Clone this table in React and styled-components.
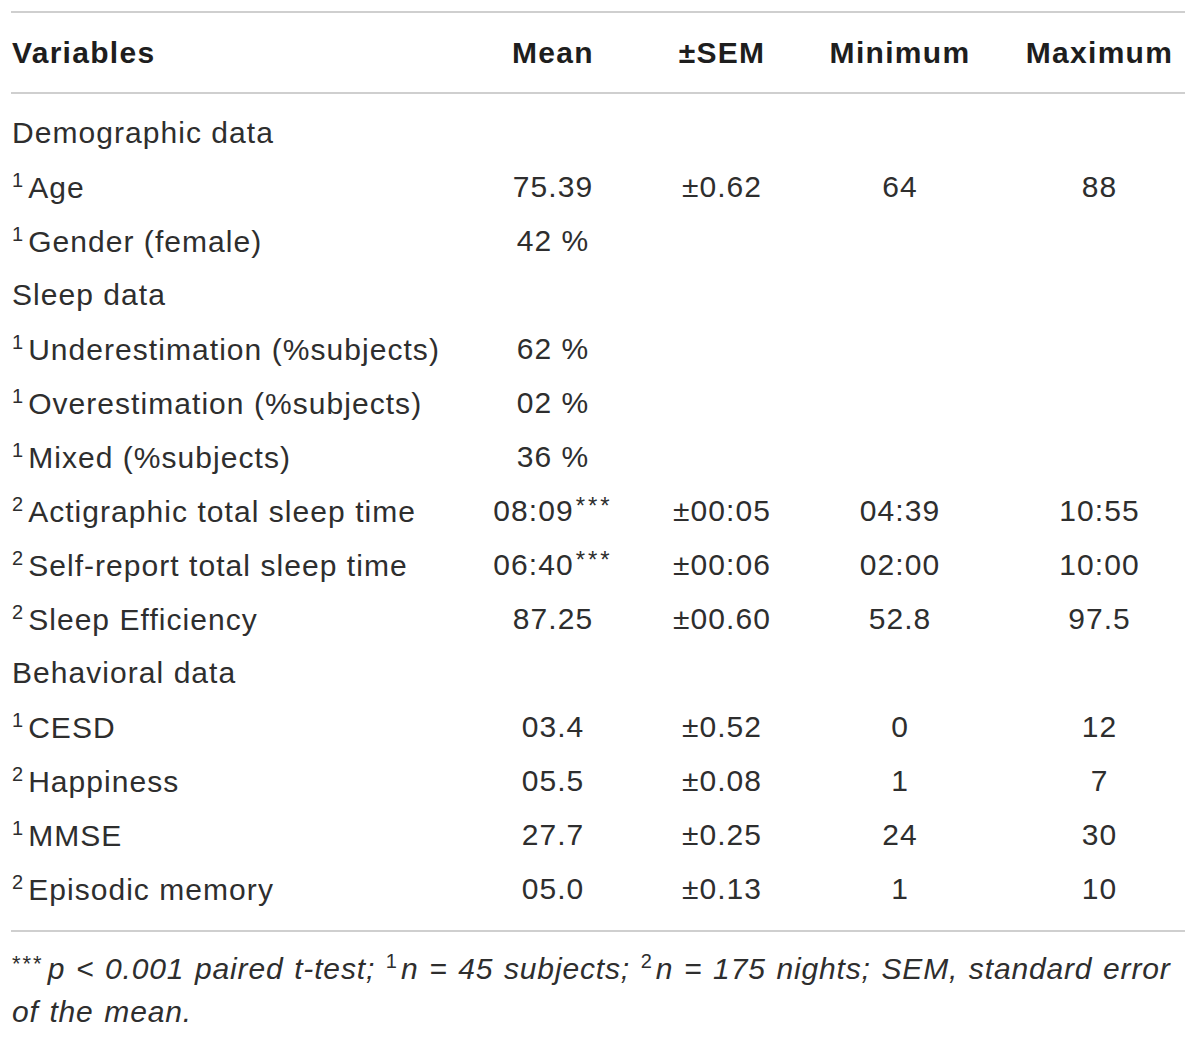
import React from 'react'
import styled, { createGlobalStyle } from 'styled-components'

const rows = [
  { section: 'Demographic data' },
  { sup: '1', label: 'Age', mean: '75.39', sem: '±0.62', min: '64', max: '88' },
  { sup: '1', label: 'Gender (female)', mean: '42 %' },
  { section: 'Sleep data' },
  { sup: '1', label: 'Underestimation (%subjects)', mean: '62 %' },
  { sup: '1', label: 'Overestimation (%subjects)', mean: '02 %' },
  { sup: '1', label: 'Mixed (%subjects)', mean: '36 %' },
  { sup: '2', label: 'Actigraphic total sleep time', mean: '08:09', star: true, sem: '±00:05', min: '04:39', max: '10:55' },
  { sup: '2', label: 'Self-report total sleep time', mean: '06:40', star: true, sem: '±00:06', min: '02:00', max: '10:00' },
  { sup: '2', label: 'Sleep Efficiency', mean: '87.25', sem: '±00.60', min: '52.8', max: '97.5' },
  { section: 'Behavioral data' },
  { sup: '1', label: 'CESD', mean: '03.4', sem: '±0.52', min: '0', max: '12' },
  { sup: '2', label: 'Happiness', mean: '05.5', sem: '±0.08', min: '1', max: '7' },
  { sup: '1', label: 'MMSE', mean: '27.7', sem: '±0.25', min: '24', max: '30' },
  { sup: '2', label: 'Episodic memory', mean: '05.0', sem: '±0.13', min: '1', max: '10' },
]

function App() {
  return (
    <>
      <GlobalStyle />
      <Page>
        <Rule />
        <HeadRow>
          <Cell $align='left'>Variables</Cell>
          <Cell>Mean</Cell>
          <Cell>±SEM</Cell>
          <Cell>Minimum</Cell>
          <Cell $last>Maximum</Cell>
        </HeadRow>
        <Rule />
        <Body>
          {rows.map((row, i) =>
            row.section ? (
              <Row key={i}>
                <Cell $align='left'>{row.section}</Cell>
              </Row>
            ) : (
              <Row key={i}>
                <Cell $align='left'>
                  <Sup>{row.sup}</Sup>{row.label}
                </Cell>
                <Cell>
                  {row.mean}
                  {row.star && <Star>***</Star>}
                </Cell>
                <Cell>{row.sem}</Cell>
                <Cell>{row.min}</Cell>
                <Cell $last>{row.max}</Cell>
              </Row>
            )
          )}
        </Body>
        <Rule />
        <Note>
          <NoteSup $wide>***</NoteSup>p &lt; 0.001 paired t-test; <NoteSup>1</NoteSup>n = 45 subjects;{' '}
          <NoteSup>2</NoteSup>n = 175 nights; SEM, standard error of the mean.
        </Note>
      </Page>
    </>
  )
}

export default App

const GlobalStyle = createGlobalStyle`
  body {
    margin: 0;
    background: #ffffff;
    font-family: "Liberation Sans", Arial, sans-serif;
    color: #2e2e2e;
  }
`
const Page = styled.div`
  width: 1174px;
  margin: 11px 0 0 11px;
`
const Rule = styled.div`
  height: 2px;
  background-color: #cfcfcf;
`
const Grid = styled.div`
  display: grid;
  grid-template-columns: 459px 166px 172px 184px 193px;
  align-items: center;
`
const HeadRow = styled(Grid)`
  height: 79px;
  font-size: 30px;
  font-weight: 700;
  letter-spacing: 1.3px;
  color: #1e1e1e;
`
const Body = styled.div`
  padding: 12px 0 14px;
`
const Row = styled(Grid)`
  height: 54px;
  font-size: 30px;
  letter-spacing: 1.05px;
`
const Cell = styled.div`
  text-align: ${(props) => props.$align || 'center'};
  padding-left: ${(props) => (props.$last ? '22px' : props.$align === 'left' ? '1px' : '0')};
  white-space: nowrap;
`
const Sup = styled.span`
  font-size: 20px;
  line-height: 1;
  vertical-align: 11px;
  margin-right: 5px;
  letter-spacing: 0;
`
const Star = styled.span`
  font-size: 24px;
  line-height: 1;
  vertical-align: 7px;
  margin-left: 2px;
  letter-spacing: 3px;
`
const Note = styled.p`
  margin: 0;
  padding: 15px 0 0 1px;
  font-size: 30px;
  line-height: 43px;
  font-style: italic;
  letter-spacing: 0.85px;
  word-spacing: 1.5px;
  color: #2e2e2e;
`
const NoteSup = styled.span`
  font-size: ${(props) => (props.$wide ? '22px' : '20px')};
  font-style: normal;
  line-height: 1;
  vertical-align: ${(props) => (props.$wide ? '8px' : '11px')};
  margin-right: 4px;
  letter-spacing: ${(props) => (props.$wide ? '2px' : '0')};
`
